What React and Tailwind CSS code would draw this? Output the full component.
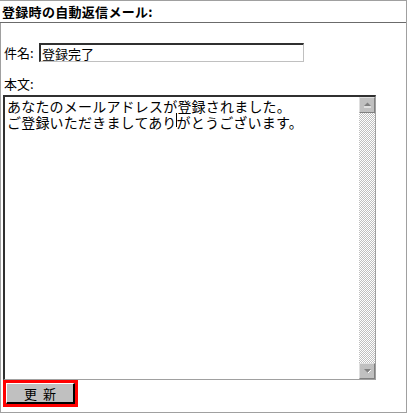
const FONT = { fontFamily: '"MS PGothic", "Noto Sans CJK JP", sans-serif' }

function ScrollButton({ dir }) {
  return (
    <div className="w-[16px] h-[16px] bg-[#c0c0c0] border-t border-l border-[#dfdfdf] border-r border-b border-r-[#808080] border-b-[#808080] flex items-center justify-center">
      <svg width="9" height="6" viewBox="0 0 9 6">
        {dir === 'up' ? (
          <>
            <path d="M4.5 0.5 L8 4 L1 4 Z" fill="#808080" />
            <path d="M1 5 H8" stroke="#ffffff" strokeWidth="1" />
          </>
        ) : (
          <>
            <path d="M1 1 L8 1 L4.5 4.5 Z" fill="#808080" />
            <path d="M5 5 L8 2" stroke="#ffffff" strokeWidth="1" />
          </>
        )}
      </svg>
    </div>
  )
}

export default function App() {
  return (
    <div className="w-[408px] h-[414px] bg-white text-black" style={FONT}>
      <div className="w-[407px] h-[413px] border-t border-r border-b border-[#a0a0a0] flex flex-col">
        <div className="h-[22px] border-b border-[#6b6b6b] pl-[2px] flex items-center">
          <span className="text-[13px] font-bold leading-none tracking-[0.3px]">登録時の自動返信メール:</span>
        </div>

        <div className="flex-1 border-l border-[#a0a0a0] pl-[2px]">
          <div className="mt-[20px] flex items-center h-[19px]">
            <span className="text-[13px] leading-none w-[36px] pl-[1px]">件名:</span>
            <div className="w-[265px] h-[19px] border-t-2 border-l-2 border-[#303030] border-r border-b border-r-[#c0c0c0] border-b-[#c0c0c0] pl-[1px] flex items-center">
              <span className="text-[13px] leading-none">登録完了</span>
            </div>
          </div>

          <div className="mt-[15px] text-[13px] leading-none pl-[1px]">本文:</div>

          <div className="mt-[5px] w-[373px] h-[285px] border-t-2 border-l-2 border-[#303030] border-r border-b border-r-[#a0a0a0] border-b-[#a0a0a0] flex">
            <div className="flex-1 pl-[2px] pt-[1px] text-[14px] leading-[16px] tracking-[0.2px]">
              <div>あなたのメールアドレスが登録されました。</div>
              <div>
                <span className="relative">
                  ご登録いただきましてあり
                  <span className="absolute right-0 top-[1px] w-px h-[14px] bg-black" />
                </span>
                がとうございます。
              </div>
            </div>
            <div className="w-[16px] flex flex-col">
              <ScrollButton dir="up" />
              <div className="flex-1 bg-[repeating-conic-gradient(#c0c0c0_0_25%,#ffffff_0_50%)] bg-[length:2px_2px]" />
              <ScrollButton dir="down" />
            </div>
          </div>

          <div className="w-[75px] h-[27px] border-[3px] border-[#ff0000]">
            <div className="w-full h-full bg-[#c0c0c0] border-t border-l border-white border-r-2 border-b-2 border-r-black border-b-black flex items-center justify-center">
              <span className="text-[13px] leading-none tracking-[6px] pl-[6px]">更新</span>
            </div>
          </div>
        </div>
      </div>
    </div>
  )
}
